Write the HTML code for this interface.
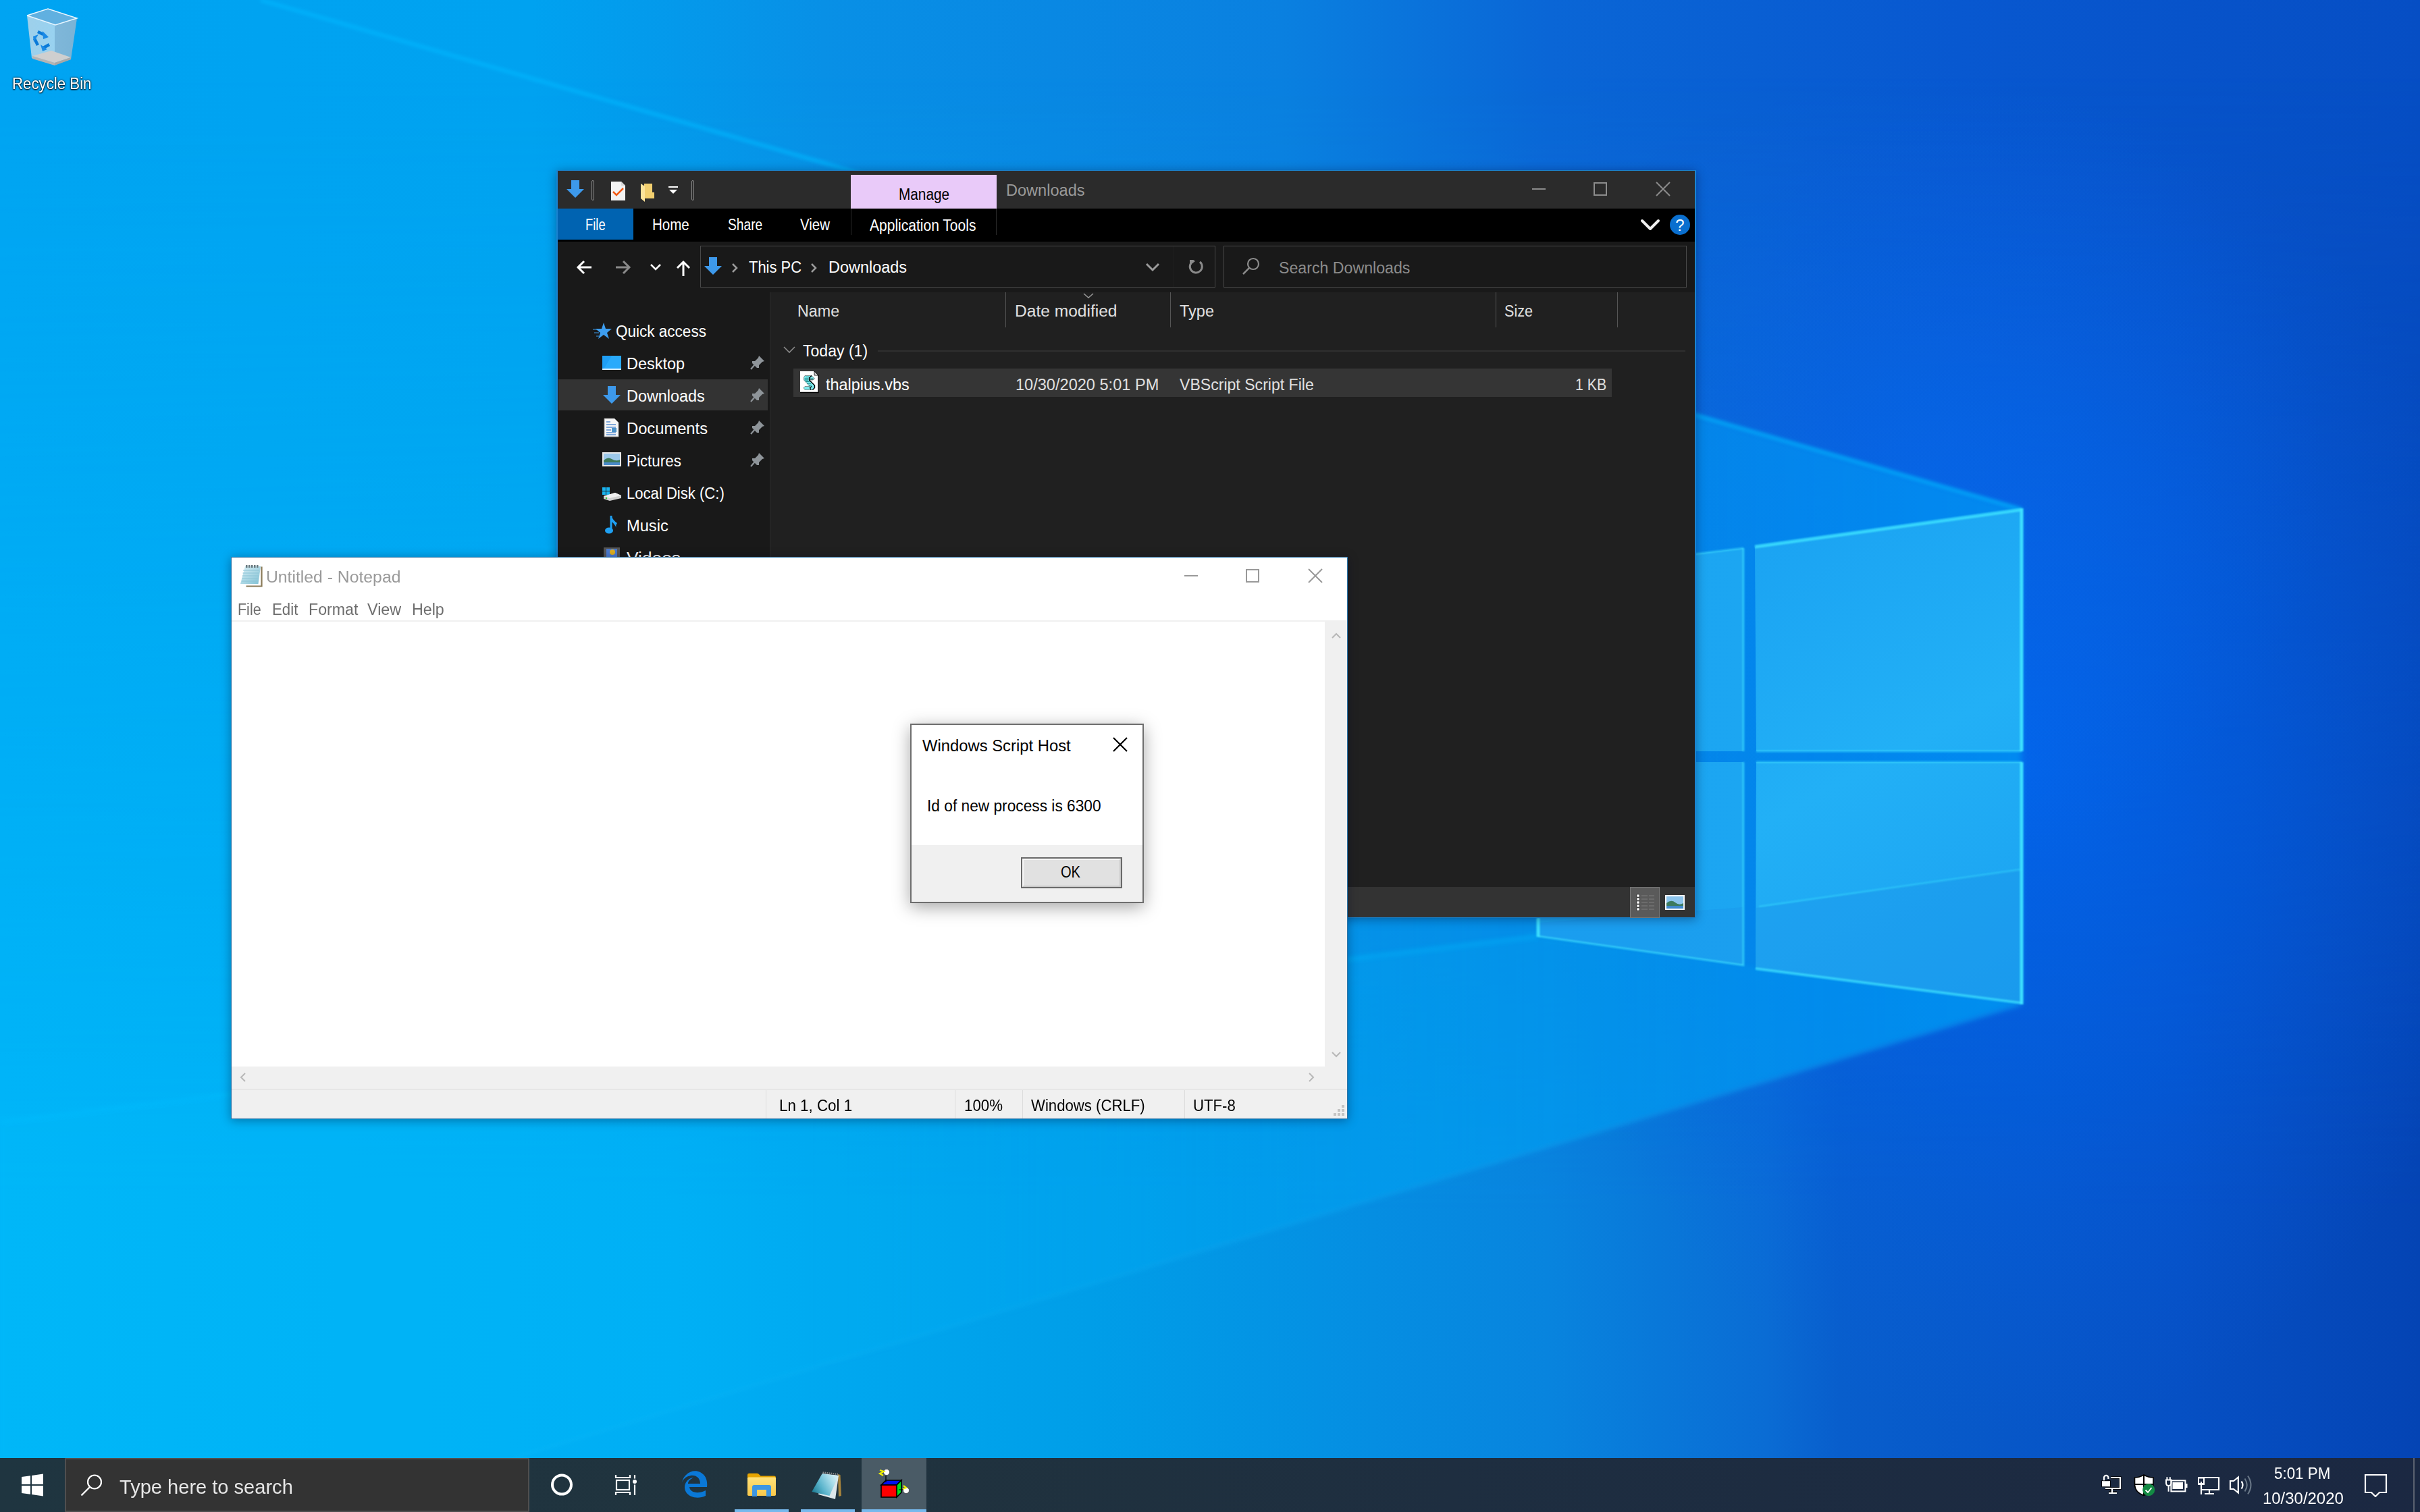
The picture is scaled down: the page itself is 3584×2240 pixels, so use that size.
<!DOCTYPE html>
<html><head><meta charset="utf-8"><style>
html,body{margin:0;padding:0;width:3584px;height:2240px;overflow:hidden;background:#0a8ae6}
.t{position:absolute;white-space:pre;font-family:"Liberation Sans",sans-serif;line-height:normal;transform-origin:0 0}
</style></head><body>

<svg width="3584" height="2240" viewBox="0 0 3584 2240" style="position:absolute;left:0;top:0">
<defs>
 <linearGradient id="gtop" x1="0" y1="0" x2="3584" y2="0" gradientUnits="userSpaceOnUse">
  <stop offset="0" stop-color="#00a4f2"/>
  <stop offset="0.22" stop-color="#00a2f0"/>
  <stop offset="0.34" stop-color="#0890e6"/>
  <stop offset="0.53" stop-color="#0a80e0"/>
  <stop offset="0.64" stop-color="#0a66d6"/>
  <stop offset="0.81" stop-color="#0858d0"/>
  <stop offset="1" stop-color="#064ec4"/>
 </linearGradient>
 <linearGradient id="gbot" x1="0" y1="0" x2="3584" y2="0" gradientUnits="userSpaceOnUse">
  <stop offset="0" stop-color="#00b6f8"/>
  <stop offset="0.28" stop-color="#00aef4"/>
  <stop offset="0.45" stop-color="#009ee8"/>
  <stop offset="0.64" stop-color="#0884de"/>
  <stop offset="0.73" stop-color="#0a6cd4"/>
  <stop offset="0.76" stop-color="#085ecc"/>
  <stop offset="0.9" stop-color="#0650c4"/>
  <stop offset="1" stop-color="#0444b4"/>
 </linearGradient>
 <linearGradient id="vmask" x1="0" y1="0" x2="0" y2="2240" gradientUnits="userSpaceOnUse">
  <stop offset="0.05" stop-color="#fff" stop-opacity="0"/>
  <stop offset="0.8" stop-color="#fff" stop-opacity="1"/>
 </linearGradient>
 <mask id="mbot"><rect width="3584" height="2240" fill="url(#vmask)"/></mask>
 <linearGradient id="wedge" x1="1200" y1="0" x2="2994" y2="0" gradientUnits="userSpaceOnUse">
  <stop offset="0" stop-color="#00a4f4" stop-opacity="0"/>
  <stop offset="0.5" stop-color="#00a0f4" stop-opacity="0.42"/>
  <stop offset="1" stop-color="#0098f4" stop-opacity="0.72"/>
 </linearGradient>
 <radialGradient id="glow" cx="2994" cy="1120" r="800" gradientUnits="userSpaceOnUse" gradientTransform="translate(2994 1080) scale(0.9 1.25) translate(-2994 -1080)">
  <stop offset="0" stop-color="#006cfc" stop-opacity="0.62"/>
  <stop offset="0.5" stop-color="#0066f4" stop-opacity="0.35"/>
  <stop offset="1" stop-color="#0a60e8" stop-opacity="0"/>
 </radialGradient>
 <radialGradient id="glow2" cx="2850" cy="700" r="600" gradientUnits="userSpaceOnUse">
  <stop offset="0" stop-color="#0a70f4" stop-opacity="0.35"/>
  <stop offset="1" stop-color="#0a70f4" stop-opacity="0"/>
 </radialGradient>
 <linearGradient id="paneR" x1="2600" y1="760" x2="2994" y2="1480" gradientUnits="userSpaceOnUse">
  <stop offset="0" stop-color="#1aa2f2"/>
  <stop offset="0.5" stop-color="#22b0f6"/>
  <stop offset="1" stop-color="#1aa0f0"/>
 </linearGradient>
 <linearGradient id="paneL" x1="2280" y1="0" x2="2582" y2="0" gradientUnits="userSpaceOnUse">
  <stop offset="0" stop-color="#1aa4f2"/>
  <stop offset="1" stop-color="#1ca6f2"/>
 </linearGradient>
 <filter id="bl3" x="-10%" y="-10%" width="120%" height="120%"><feGaussianBlur stdDeviation="3"/></filter>
 <filter id="bl2" x="-5%" y="-5%" width="110%" height="110%"><feGaussianBlur stdDeviation="2"/></filter>
 <filter id="bl6" filterUnits="userSpaceOnUse" x="1100" y="150" width="2000" height="1950"><feGaussianBlur stdDeviation="5"/></filter>
 <filter id="bl1"><feGaussianBlur stdDeviation="1"/></filter>
</defs>
<rect width="3584" height="2240" fill="url(#gtop)"/>
<rect width="3584" height="2240" fill="url(#gbot)" mask="url(#mbot)"/>
<rect x="1900" y="0" width="3584" height="2240" fill="url(#glow)"/>
<rect x="2000" y="0" width="1600" height="1400" fill="url(#glow2)"/>
<polygon points="2994,755 1200,236 1200,2029 2994,1488" fill="url(#wedge)" filter="url(#bl6)"/>
<!-- ray lines (soft) -->
<line x1="2994" y1="755" x2="386" y2="0" stroke="#00b8ff" stroke-width="7" opacity="0.55" filter="url(#bl2)"/>
<line x1="2994" y1="1488" x2="760" y2="2160" stroke="#60d8ff" stroke-width="6" opacity="0.06" filter="url(#bl3)"/>
<line x1="0" y1="1662" x2="2278" y2="1387" stroke="#00c0ff" stroke-width="6" opacity="0.35" filter="url(#bl3)"/>
<polygon points="0,1662 2278,1387 2994,1488 760,2160 0,2160" fill="#00c4ff" opacity="0.10" filter="url(#bl3)"/>
<!-- logo panes -->
<polygon points="2270,850 2582,812 2582,1113 2270,1113" fill="url(#paneL)"/>
<polygon points="2599,810 2994,755 2994,1113 2601,1113" fill="url(#paneR)"/>
<polygon points="2270,1129 2582,1129 2582,1430 2278,1387" fill="url(#paneL)"/>
<polygon points="2601,1129 2994,1129 2994,1486 2600,1435" fill="url(#paneR)"/>
<polygon points="2601,1345 2994,1288 2994,1486 2600,1435" fill="#1a8ee8" opacity="0.35"/>
<polygon points="2278,1387 2278,1367 2582,1344 2582,1430" fill="#1a8ee8" opacity="0.3"/>
<g stroke="#40e4ff" fill="none" filter="url(#bl1)">
 <polyline points="2599,810 2994,755" stroke-width="5" opacity="0.8"/>
 <polyline points="2994,1113 2601,1113" stroke-width="3" opacity="0.5"/>
 <polyline points="2601,1129 2994,1129" stroke-width="3" opacity="0.5"/>
 <polyline points="2994,1486 2600,1435" stroke-width="4" opacity="0.7"/>
 <polyline points="2582,812 2270,850" stroke-width="3" opacity="0.5"/>
 <polyline points="2582,812 2582,1113" stroke-width="3" opacity="0.6"/>
 <polyline points="2582,1129 2582,1430 2278,1387" stroke-width="3" opacity="0.6"/>
 <line x1="2278" y1="1360" x2="2278" y2="1388" stroke-width="5" opacity="0.9"/>
 <line x1="2994" y1="753" x2="2994" y2="1113" stroke-width="5" opacity="0.95"/>
 <line x1="2994" y1="1129" x2="2994" y2="1488" stroke-width="5" opacity="0.95"/>
 <line x1="2605" y1="1343" x2="2994" y2="1288" stroke-width="3" opacity="0.35"/>
</g>
</svg>

<svg width="160" height="110" style="position:absolute;left:0;top:0" viewBox="0 0 160 110">
 <defs><linearGradient id="rb" x1="0" y1="0" x2="1" y2="0"><stop offset="0" stop-color="#a6d2ea"/><stop offset="0.55" stop-color="#a0d4f0"/><stop offset="0.56" stop-color="#86b8d8"/><stop offset="1" stop-color="#80b4d4"/></linearGradient></defs>
 <polygon points="40,23 47,86 81,96 105,88 114,27 82,37" fill="url(#rb)" opacity="0.95"/>
 <polygon points="40,23 71,13 114,27 82,37" fill="#60b0e0"/>
 <polyline points="40,23 71,13 114,27 82,37 40,23" stroke="#e8f6ff" stroke-width="1.5" fill="none"/>
 <polygon points="48,83 76,75 105,85 81,93" fill="#cfcfcf"/>
 <polygon points="48,83 81,93 81,97 48,87" fill="#b4b4b4"/>
 <polygon points="81,93 105,85 105,88 81,97" fill="#a8a8a8"/>
 <g stroke="#0a7ad8" stroke-width="4.5" fill="none"><path d="M56 47 L64 51"/><path d="M51 57 L56 67"/><path d="M64 71 L73 66"/></g><g fill="#1a8ae6"><polygon points="63,46 72,55 64,58"/><polygon points="49,54 57,51 50,62"/><polygon points="60,66 70,73 63,76"/></g>
</svg>
<span class="t" style="left:18.4px;top:111.2px;font-size:23px;color:#fff;transform:scaleX(0.9676);text-shadow:0 0 3px #000,0 1px 2px #000">Recycle Bin</span>

<div style="position:absolute;left:824px;top:252px;width:1688px;height:1108px;box-shadow:0 2px 14px rgba(0,10,40,0.38)"></div>
<div style="position:absolute;left:824px;top:252px;width:1688px;height:1108px;background:#1a84d0"></div>
<div style="position:absolute;left:826px;top:253px;width:1684px;height:56px;background:#2b2b2b"></div>
<div style="position:absolute;left:826px;top:309px;width:1684px;height:49px;background:#000"></div>
<div style="position:absolute;left:826px;top:358px;width:1684px;height:75px;background:#191919"></div>
<div style="position:absolute;left:826px;top:433px;width:314px;height:881px;background:#191919"></div>
<div style="position:absolute;left:1140px;top:433px;width:1px;height:881px;background:#2a2a2a"></div>
<div style="position:absolute;left:1141px;top:433px;width:1369px;height:881px;background:#202020"></div>
<div style="position:absolute;left:826px;top:1314px;width:1684px;height:45px;background:#333"></div>
<!-- QAT -->
<svg style="position:absolute;left:839px;top:267px" width="26" height="26" viewBox="0 0 26 26"><polygon points="7,0 19,0 19,13 26,13 13,26 0,13 7,13" fill="#3d99eb"/></svg>
<div style="position:absolute;left:876px;top:267px;width:4px;height:30px;border:1px solid #8a8a8a;border-radius:3px;box-sizing:border-box"></div>
<svg style="position:absolute;left:904px;top:268px" width="24" height="30" viewBox="0 0 24 30"><path d="M1 1 H16 L22 7 V29 H1 Z" fill="#f2f2f2"/><path d="M16 1 V7 H22" fill="#d8d8d8"/><path d="M4 16 L9 21 L19 11" stroke="#f25a14" stroke-width="2.5" fill="none"/></svg>
<svg style="position:absolute;left:949px;top:271px" width="20" height="28" viewBox="0 0 20 28"><rect x="5" y="1" width="12" height="22" fill="#f2cf6f"/><rect x="15" y="14" width="5" height="9" fill="#f2cf6f"/><polygon points="0,1 6,5 6,28 0,23" fill="#fbe39a"/></svg>
<svg style="position:absolute;left:990px;top:276px" width="14" height="12" viewBox="0 0 14 12"><rect x="0" y="0" width="14" height="2" fill="#fff"/><polygon points="1,5 13,5 7,11" fill="#fff"/></svg>
<div style="position:absolute;left:1024px;top:267px;width:4px;height:30px;border:1px solid #8a8a8a;border-radius:3px;box-sizing:border-box"></div>
<div style="position:absolute;left:1260px;top:259px;width:216px;height:50px;background:#e9caf9"></div>
<div style="position:absolute;left:1260px;top:309px;width:1px;height:39px;background:#2a2a2a"></div>
<div style="position:absolute;left:1475px;top:309px;width:1px;height:39px;background:#2a2a2a"></div>
<span class="t" style="left:1330.5px;top:274.6px;font-size:23px;color:#000;transform:scaleX(0.9035);">Manage</span>
<span class="t" style="left:1490.0px;top:268.9px;font-size:23px;color:#9a9a9a;transform:scaleX(1.0238);">Downloads</span>
<svg style="position:absolute;left:2267px;top:268px" width="208" height="24" viewBox="2267 268 208 24">
 <line x1="2269" y1="280" x2="2289" y2="280" stroke="#8c8c8c" stroke-width="2"/>
 <rect x="2361" y="271" width="18" height="18" stroke="#8c8c8c" stroke-width="2" fill="none"/>
 <path d="M2453 270 L2473 290 M2473 270 L2453 290" stroke="#8c8c8c" stroke-width="2"/>
</svg>
<!-- tabs -->
<div style="position:absolute;left:826px;top:309px;width:112px;height:46px;background:#0063b1"></div>
<span class="t" style="left:867.0px;top:320.0px;font-size:23px;color:#fff;transform:scaleX(0.7987);">File</span>
<span class="t" style="left:965.8px;top:320.2px;font-size:23px;color:#fff;transform:scaleX(0.8931);">Home</span>
<span class="t" style="left:1077.5px;top:320.2px;font-size:23px;color:#fff;transform:scaleX(0.8342);">Share</span>
<span class="t" style="left:1185.0px;top:320.2px;font-size:23px;color:#fff;transform:scaleX(0.8900);">View</span>
<span class="t" style="left:1288.4px;top:321.4px;font-size:23px;color:#fff;transform:scaleX(0.9141);">Application Tools</span>
<svg style="position:absolute;left:2428px;top:322px" width="32" height="24" viewBox="0 0 32 24"><path d="M4 5 L16 17 L28 5" stroke="#f0f0f0" stroke-width="4" fill="none" stroke-linejoin="round" stroke-linecap="round"/></svg>
<svg style="position:absolute;left:2472px;top:317px" width="32" height="32" viewBox="0 0 32 32"><circle cx="16" cy="16" r="15" fill="#0a6fcf"/><text x="16" y="25" font-family="Liberation Sans" font-size="24" fill="#fff" text-anchor="middle">?</text></svg>
<!-- nav bar -->
<svg style="position:absolute;left:850px;top:383px" width="180" height="30" viewBox="850 383 180 30">
 <path d="M876 396 H856 M865 387 L856 396 L865 405" stroke="#fff" stroke-width="3" fill="none"/>
 <path d="M912 396 H932 M923 387 L932 396 L923 405" stroke="#8a8a8a" stroke-width="3" fill="none"/>
 <path d="M964 392 L971 399 L978 392" stroke="#fff" stroke-width="2.5" fill="none"/>
 <path d="M1012 409 V389 M1003 397 L1012 388 L1021 397" stroke="#fff" stroke-width="3" fill="none"/>
</svg>
<div style="position:absolute;left:1037px;top:364px;width:763px;height:62px;border:1px solid #484848;box-sizing:border-box"></div>
<div style="position:absolute;left:1738px;top:365px;width:1px;height:60px;background:#202020"></div>
<svg style="position:absolute;left:1043px;top:381px" width="26" height="26" viewBox="0 0 26 26"><polygon points="7,0 19,0 19,13 26,13 13,26 0,13 7,13" fill="#3d99eb"/></svg>
<svg style="position:absolute;left:1080px;top:385px" width="140" height="24" viewBox="1080 385 140 24">
 <path d="M1085 391 L1091 397 L1085 403" stroke="#9a9a9a" stroke-width="2.5" fill="none"/>
 <path d="M1202 391 L1208 397 L1202 403" stroke="#9a9a9a" stroke-width="2.5" fill="none"/>
</svg>
<span class="t" style="left:1108.7px;top:383.4px;font-size:23px;color:#fff;transform:scaleX(0.9536);">This PC</span>
<span class="t" style="left:1226.9px;top:382.9px;font-size:23px;color:#fff;transform:scaleX(1.0202);">Downloads</span>
<svg style="position:absolute;left:1690px;top:385px" width="100" height="24" viewBox="1690 385 100 24">
 <path d="M1698 391 L1707 400 L1716 391" stroke="#9a9a9a" stroke-width="3" fill="none"/>
 <path d="M1777 388 A 9 9 0 1 1 1767 387" stroke="#8a8a8a" stroke-width="3" fill="none"/>
 <polygon points="1762,381 1770,387 1762,393" fill="#8a8a8a"/>
</svg>
<div style="position:absolute;left:1812px;top:364px;width:686px;height:62px;border:1px solid #484848;box-sizing:border-box"></div>
<svg style="position:absolute;left:1838px;top:381px" width="30" height="28" viewBox="0 0 30 28"><circle cx="18" cy="10" r="8" stroke="#8c8c8c" stroke-width="2.2" fill="none"/><path d="M12 16 L3 25" stroke="#8c8c8c" stroke-width="2.5"/></svg>
<span class="t" style="left:1893.6px;top:383.8px;font-size:23px;color:#8c8c8c;transform:scaleX(1.0069);">Search Downloads</span>
<!-- nav pane -->
<svg style="position:absolute;left:876px;top:476px" width="32" height="28" viewBox="0 0 32 28"><polygon points="18,2 21,11 30,11 23,17 26,26 18,20 10,26 13,17 6,11 15,11" fill="#3d9ef0"/><path d="M2 12 H9 M4 17 H11 M7 22 H11" stroke="#3d9ef0" stroke-width="1.2"/></svg>
<span class="t" style="left:911.5px;top:478.4px;font-size:23px;color:#fff;transform:scaleX(0.9790);">Quick access</span>
<div style="position:absolute;left:827px;top:562px;width:310px;height:46px;background:#333"></div>
<svg style="position:absolute;left:892px;top:527px" width="28" height="21" viewBox="0 0 28 21"><rect x="0" y="0" width="28" height="20" fill="#1f9ff5"/><polygon points="14,0 28,0 28,20 2,20" fill="#31b2ff" opacity="0.6"/><rect x="0" y="19" width="28" height="2" fill="#d8ecff"/></svg>
<span class="t" style="left:928.3px;top:526.1px;font-size:23px;color:#fff;transform:scaleX(1.0204);">Desktop</span>
<svg style="position:absolute;left:893px;top:572px" width="26" height="26" viewBox="0 0 26 26"><polygon points="7,0 19,0 19,13 26,13 13,26 0,13 7,13" fill="#3d99eb"/></svg>
<span class="t" style="left:928.3px;top:573.7px;font-size:23px;color:#fff;transform:scaleX(1.0176);">Downloads</span>
<svg style="position:absolute;left:894px;top:619px" width="23" height="29" viewBox="0 0 23 29"><path d="M1 1 H16 L22 7 V28 H1 Z" fill="#f5f5f5" stroke="#9a9a9a" stroke-width="1"/><path d="M4 6 H10 M4 10 H18 M4 14 H18 M4 18 H11 M4 22 H18 M4 25 H18" stroke="#5b8fd0" stroke-width="1.3"/><rect x="12" y="15" width="7" height="6" fill="#4c93c8"/></svg>
<span class="t" style="left:928.3px;top:621.6px;font-size:23px;color:#fff;transform:scaleX(1.0316);">Documents</span>
<svg style="position:absolute;left:892px;top:670px" width="28" height="21" viewBox="0 0 28 21"><rect x="0" y="0" width="28" height="21" fill="#e8e8e8"/><rect x="2" y="2" width="24" height="17" fill="#9cc8ea"/><path d="M2 12 Q8 6 14 10 T26 11 V19 H2 Z" fill="#3e7a5a"/><rect x="2" y="15" width="24" height="4" fill="#4a8ac8"/></svg>
<span class="t" style="left:928.3px;top:669.6px;font-size:23px;color:#fff;transform:scaleX(0.9736);">Pictures</span>
<svg style="position:absolute;left:891px;top:721px" width="30" height="22" viewBox="0 0 30 22"><rect x="1" y="1" width="5" height="5" fill="#19b4f0"/><rect x="7" y="1" width="5" height="5" fill="#19b4f0"/><rect x="1" y="7" width="5" height="5" fill="#19b4f0"/><rect x="7" y="7" width="5" height="5" fill="#19b4f0"/><polygon points="3,14 20,9 29,13 29,17 12,21 3,18" fill="#d0d0d0"/><polygon points="3,14 12,17 29,13 20,9" fill="#f0f0f0"/><circle cx="7" cy="17" r="1.2" fill="#3c3"/></svg>
<span class="t" style="left:928.3px;top:717.7px;font-size:23px;color:#fff;transform:scaleX(0.9601);">Local Disk (C:)</span>
<svg style="position:absolute;left:896px;top:763px" width="20" height="29" viewBox="0 0 20 29"><path d="M9 1 V22" stroke="#1fa0f2" stroke-width="3"/><ellipse cx="6" cy="23" rx="6" ry="4.5" fill="#1fa0f2"/><path d="M9 1 Q12 8 18 12 Q15 16 17 19 Q13 12 10 10" fill="#1fa0f2"/></svg>
<span class="t" style="left:928.3px;top:765.6px;font-size:23px;color:#fff;transform:scaleX(1.0289);">Music</span>
<svg style="position:absolute;left:894px;top:811px" width="24" height="14" viewBox="0 0 24 14"><rect x="0" y="0" width="24" height="14" fill="#555"/><rect x="4" y="2" width="16" height="12" fill="#4a7ad0"/><circle cx="13" cy="7" r="4" fill="#e0b020"/></svg>
<span class="t" style="left:928.3px;top:813.6px;font-size:23px;color:#fff;transform:scaleX(1.1441);">Videos</span>
<svg style="position:absolute;left:1111px;top:526px" width="22" height="22" viewBox="0 0 22 22"><path d="M13 1 L21 9 L18 10 L13 15 L13 19 L10 19 L3 12 L3 9 L7 9 L12 4 Z" fill="#8e9499"/><path d="M7 14 L1 21" stroke="#8e9499" stroke-width="2.2"/></svg><svg style="position:absolute;left:1111px;top:574px" width="22" height="22" viewBox="0 0 22 22"><path d="M13 1 L21 9 L18 10 L13 15 L13 19 L10 19 L3 12 L3 9 L7 9 L12 4 Z" fill="#8e9499"/><path d="M7 14 L1 21" stroke="#8e9499" stroke-width="2.2"/></svg><svg style="position:absolute;left:1111px;top:622px" width="22" height="22" viewBox="0 0 22 22"><path d="M13 1 L21 9 L18 10 L13 15 L13 19 L10 19 L3 12 L3 9 L7 9 L12 4 Z" fill="#8e9499"/><path d="M7 14 L1 21" stroke="#8e9499" stroke-width="2.2"/></svg><svg style="position:absolute;left:1111px;top:670px" width="22" height="22" viewBox="0 0 22 22"><path d="M13 1 L21 9 L18 10 L13 15 L13 19 L10 19 L3 12 L3 9 L7 9 L12 4 Z" fill="#8e9499"/><path d="M7 14 L1 21" stroke="#8e9499" stroke-width="2.2"/></svg>
<!-- headers -->
<span class="t" style="left:1181.0px;top:448.1px;font-size:23px;color:#e0e0e0;transform:scaleX(1.0121);">Name</span>
<span class="t" style="left:1502.9px;top:448.1px;font-size:23px;color:#e0e0e0;transform:scaleX(1.0675);">Date modified</span>
<span class="t" style="left:1747.1px;top:448.1px;font-size:23px;color:#e0e0e0;transform:scaleX(1.0226);">Type</span>
<span class="t" style="left:2228.4px;top:448.1px;font-size:23px;color:#e0e0e0;transform:scaleX(0.9385);">Size</span>
<div style="position:absolute;left:1489px;top:433px;width:1px;height:52px;background:#555"></div>
<div style="position:absolute;left:1733px;top:433px;width:1px;height:52px;background:#555"></div>
<div style="position:absolute;left:2215px;top:433px;width:1px;height:52px;background:#555"></div>
<div style="position:absolute;left:2395px;top:433px;width:1px;height:52px;background:#555"></div>
<svg style="position:absolute;left:1603px;top:433px" width="18" height="10" viewBox="0 0 18 10"><path d="M2 2 L9 8 L16 2" stroke="#9a9a9a" stroke-width="1.5" fill="none"/></svg>
<svg style="position:absolute;left:1158px;top:510px" width="22" height="16" viewBox="0 0 22 16"><path d="M3 4 L11 12 L19 4" stroke="#8a8a8a" stroke-width="1.6" fill="none"/></svg>
<span class="t" style="left:1188.9px;top:507.1px;font-size:23px;color:#fff;transform:scaleX(1.0023);">Today (1)</span>
<div style="position:absolute;left:1300px;top:519px;width:1196px;height:2px;background:#2f2f2f"></div>
<div style="position:absolute;left:1175px;top:546px;width:1212px;height:42px;background:#353535"></div>
<svg style="position:absolute;left:1185px;top:550px" width="28" height="33" viewBox="0 0 28 33"><polygon points="0,0 21,0 27,6 27,31 0,31" fill="#fff"/><path d="M21 0.5 L27 6.5 V31.5 H0" stroke="#000" stroke-width="1.3" fill="none"/><polygon points="21,0 21,6 27,6" fill="#d0d0d0" stroke="#000" stroke-width="0.8"/><path d="M7 6.5 H17 L21.5 11 L19 13 H14 L21.5 20.5 V24.5 L18.5 27.5 H7 L5 24.5 L7 22.5 H14.5 L5.5 13 V9 Z" fill="#7eeaee" stroke="#555" stroke-width="0.6"/><path d="M17 6.5 L13.5 10 V13 L21.5 21 V24.5 L18.5 27.5" stroke="#000" stroke-width="1.4" fill="none"/><path d="M14 11.5 H19.5" stroke="#000" stroke-width="1.2"/><path d="M8 8.5 H13 M6.5 11 H12 M6.5 13 H12 M8 15.5 H14 M10 18 H16 M11.5 20.5 H17" stroke="#0a7a7a" stroke-width="1.2"/><path d="M16 27.5 L14.5 24.5 L17 22.5" stroke="#000" stroke-width="1.2" fill="none"/></svg>
<span class="t" style="left:1222.5px;top:556.6px;font-size:23px;color:#fff;transform:scaleX(1.0192);">thalpius.vbs</span>
<span class="t" style="left:1503.7px;top:556.6px;font-size:23px;color:#e0e0e0;transform:scaleX(1.0248);">10/30/2020 5:01 PM</span>
<span class="t" style="left:1747.0px;top:556.6px;font-size:23px;color:#e0e0e0;transform:scaleX(1.0035);">VBScript Script File</span>
<span class="t" style="left:2333.2px;top:556.6px;font-size:23px;color:#e0e0e0;transform:scaleX(0.9283);">1 KB</span>
<!-- status bar view buttons -->
<div style="position:absolute;left:2414px;top:1314px;width:44px;height:46px;background:#5a5a5a;border:1px solid #777;box-sizing:border-box"></div>
<svg style="position:absolute;left:2422px;top:1324px" width="30" height="28" viewBox="0 0 30 28"><g fill="#fff" stroke="#222" stroke-width="0.6"><rect x="2" y="1" width="4" height="4"/><rect x="2" y="6" width="4" height="4"/><rect x="2" y="11" width="4" height="4"/><rect x="2" y="16" width="4" height="4"/><rect x="2" y="21" width="4" height="4"/></g><g stroke="#888" stroke-width="0.8"><path d="M9 3 H18 M20 3 H28 M9 8 H18 M20 8 H28 M9 13 H18 M20 13 H28 M9 18 H18 M20 18 H28 M9 23 H18 M20 23 H28"/></g></svg>
<svg style="position:absolute;left:2466px;top:1326px" width="29" height="22" viewBox="0 0 29 22"><rect x="0" y="0" width="29" height="22" fill="#f4f4f4"/><rect x="2" y="2" width="25" height="18" fill="#8cc4ec"/><path d="M2 12 Q9 6 15 11 T27 12 V20 H2 Z" fill="#3c7a5e"/><rect x="2" y="16" width="25" height="4" fill="#3f88cc"/></svg>


<div style="position:absolute;left:342px;top:825px;width:1654px;height:833px;box-shadow:0 2px 14px rgba(0,10,40,0.38)"></div>
<div style="position:absolute;left:342px;top:825px;width:1654px;height:833px;background:#2a74a8"></div>
<div style="position:absolute;left:343px;top:826px;width:1652px;height:831px;background:#fff"></div>
<svg style="position:absolute;left:355px;top:836px" width="34" height="34" viewBox="0 0 34 34"><defs><linearGradient id="npg" x1="0" y1="0" x2="1" y2="1"><stop offset="0" stop-color="#dcf0f6"/><stop offset="1" stop-color="#7ec0d4"/></linearGradient></defs><rect x="9" y="3" width="24" height="30" fill="#fff"/><path d="M32.5 3.5 V32.5 H9.5" stroke="#8a7a58" stroke-width="2.2" fill="none"/><polygon points="8,3 31,3 27.5,29 1,29" fill="url(#npg)"/><path d="M5 9 H29 M4.5 13 H28.5 M4 17 H28 M3.5 21 H27.5 M3 25 H27" stroke="#8cc4d6" stroke-width="1.2"/><g fill="#6a7a80"><rect x="9" y="1" width="2.5" height="4"/><rect x="13" y="1" width="2.5" height="4"/><rect x="17" y="1" width="2.5" height="4"/><rect x="21" y="1" width="2.5" height="4"/><rect x="25" y="1" width="2.5" height="4"/></g></svg>
<span class="t" style="left:393.8px;top:842.3px;font-size:23px;color:#999;transform:scaleX(1.0756);">Untitled - Notepad</span>
<svg style="position:absolute;left:1752px;top:841px" width="208" height="24" viewBox="1752 841 208 24">
 <line x1="1754" y1="853" x2="1774" y2="853" stroke="#999" stroke-width="2"/>
 <rect x="1846" y="844" width="18" height="18" stroke="#999" stroke-width="2" fill="none"/>
 <path d="M1938 843 L1958 863 M1958 843 L1938 863" stroke="#999" stroke-width="2"/>
</svg>
<span class="t" style="left:351.5px;top:889.8px;font-size:23px;color:#6d6d6d;transform:scaleX(0.9336);">File</span>
<span class="t" style="left:402.5px;top:889.8px;font-size:23px;color:#6d6d6d;transform:scaleX(0.9687);">Edit</span>
<span class="t" style="left:456.6px;top:889.8px;font-size:23px;color:#6d6d6d;transform:scaleX(1.0076);">Format</span>
<span class="t" style="left:544.4px;top:889.8px;font-size:23px;color:#6d6d6d;transform:scaleX(1.0154);">View</span>
<span class="t" style="left:610.4px;top:889.8px;font-size:23px;color:#6d6d6d;transform:scaleX(1.0103);">Help</span>
<div style="position:absolute;left:343px;top:919px;width:1652px;height:2px;background:#f0f0f0"></div>
<div style="position:absolute;left:1962px;top:921px;width:33px;height:659px;background:#f0f0f0"></div>
<div style="position:absolute;left:343px;top:1580px;width:1652px;height:33px;background:#f0f0f0"></div>
<div style="position:absolute;left:343px;top:1613px;width:1652px;height:1px;background:#d9d9d9"></div>
<div style="position:absolute;left:343px;top:1614px;width:1652px;height:43px;background:#f0f0f0"></div>
<svg style="position:absolute;left:343px;top:921px" width="1652" height="736" viewBox="343 921 1652 736">
 <path d="M1973 945 L1979 939 L1985 945" stroke="#b8b8b8" stroke-width="2" fill="none"/>
 <path d="M1973 1559 L1979 1565 L1985 1559" stroke="#b8b8b8" stroke-width="2" fill="none"/>
 <path d="M363 1590 L357 1596 L363 1602" stroke="#b8b8b8" stroke-width="2" fill="none"/>
 <path d="M1939 1590 L1945 1596 L1939 1602" stroke="#b8b8b8" stroke-width="2" fill="none"/>
 <g fill="#c4c4c4"><rect x="1987" y="1637" width="4" height="4"/><rect x="1981" y="1643" width="4" height="4"/><rect x="1987" y="1643" width="4" height="4"/><rect x="1975" y="1649" width="4" height="4"/><rect x="1981" y="1649" width="4" height="4"/><rect x="1987" y="1649" width="4" height="4"/></g>
 <g fill="#dcdcdc"><rect x="1134" y="1615" width="1" height="42"/><rect x="1414" y="1615" width="1" height="42"/><rect x="1514" y="1615" width="1" height="42"/><rect x="1754" y="1615" width="1" height="42"/></g>
</svg>
<span class="t" style="left:1154.0px;top:1625.1px;font-size:23px;color:#000;transform:scaleX(0.9726);">Ln 1, Col 1</span>
<span class="t" style="left:1427.5px;top:1625.1px;font-size:23px;color:#000;transform:scaleX(0.9689);">100%</span>
<span class="t" style="left:1526.6px;top:1625.1px;font-size:23px;color:#000;transform:scaleX(0.9636);">Windows (CRLF)</span>
<span class="t" style="left:1766.7px;top:1625.1px;font-size:23px;color:#000;transform:scaleX(0.9636);">UTF-8</span>


<div style="position:absolute;left:1348px;top:1072px;width:346px;height:266px;box-shadow:0 6px 24px rgba(0,0,0,0.35)"></div>
<div style="position:absolute;left:1348px;top:1072px;width:346px;height:266px;background:#6e6e6e"></div>
<div style="position:absolute;left:1350px;top:1074px;width:342px;height:178px;background:#fff"></div>
<div style="position:absolute;left:1350px;top:1252px;width:342px;height:84px;background:#f0f0f0"></div>
<span class="t" style="left:1366.4px;top:1092.0px;font-size:23px;color:#000;transform:scaleX(1.0355);">Windows Script Host</span>
<svg style="position:absolute;left:1646px;top:1090px" width="26" height="26" viewBox="0 0 26 26"><path d="M3 3 L23 23 M23 3 L3 23" stroke="#000" stroke-width="2.2"/></svg>
<span class="t" style="left:1372.6px;top:1181.2px;font-size:23px;color:#000;transform:scaleX(0.9876);">Id of new process is 6300</span>
<div style="position:absolute;left:1512px;top:1270px;width:150px;height:46px;background:#6a6a6a"></div>
<div style="position:absolute;left:1514px;top:1272px;width:146px;height:42px;background:#e1e1e1;border:2px solid #f8f8f8;box-sizing:border-box;border-right-color:#c8c8c8;border-bottom-color:#c8c8c8"></div>
<span class="t" style="left:1571.0px;top:1278.6px;font-size:23px;color:#000;transform:scaleX(0.8726);">OK</span>


<div style="position:absolute;left:0;top:2160px;width:3584px;height:80px;background:linear-gradient(90deg,#1f3540 0%,#20333e 35%,#1e2e40 60%,#1b2842 100%)"></div>
<svg style="position:absolute;left:30px;top:2182px" width="36" height="36" viewBox="0 0 36 36"><polygon points="2,6 15,4.2 15,17 2,17" fill="#fff"/><polygon points="17,4 34,1.6 34,17 17,17" fill="#fff"/><polygon points="2,19 15,19 15,31.8 2,30" fill="#fff"/><polygon points="17,19 34,19 34,34.4 17,32" fill="#fff"/></svg>
<div style="position:absolute;left:96px;top:2160px;width:688px;height:80px;background:#333;border:2px solid #4f4f4f;box-sizing:border-box"></div>
<svg style="position:absolute;left:116px;top:2180px" width="40" height="40" viewBox="0 0 40 40"><circle cx="24" cy="15.5" r="10" stroke="#fff" stroke-width="2.2" fill="none"/><path d="M17 23 L4.5 35.5" stroke="#fff" stroke-width="2.4"/></svg>
<span class="t" style="left:176.9px;top:2185.5px;font-size:30px;color:#e6e6e6;transform:scaleX(0.9685);">Type here to search</span>
<svg style="position:absolute;left:812px;top:2180px" width="40" height="40" viewBox="0 0 40 40"><circle cx="20" cy="19.6" r="14" stroke="#fff" stroke-width="4" fill="none"/></svg>
<svg style="position:absolute;left:908px;top:2182px" width="40" height="36" viewBox="0 0 40 36"><path d="M4 3 V7 H25 V3 M4 33 V29 H25 V33" stroke="#fff" stroke-width="2.2" fill="none"/><rect x="5" y="11" width="19" height="14" stroke="#fff" stroke-width="2.2" fill="none"/><path d="M32 3 V8.5 M32 17.5 V33" stroke="#fff" stroke-width="2.2"/><circle cx="32" cy="13" r="3" fill="#fff"/></svg>
<svg style="position:absolute;left:1007px;top:2176px" width="44" height="44" viewBox="0 0 44 44"><path d="M3 20 C6 6 20 0 30 5 C39 10 41 18 40 27 H14 C15 35 26 38 38 32 V40 C26 46 8 42 7 28 C7 20 12 14 20 13 C14 16 12 19 12 22 H30 C30 14 24 9 16 10 C10 11 5 15 3 20 Z" fill="#0a78d7"/></svg>
<svg style="position:absolute;left:1100px;top:2178px" width="56" height="44" viewBox="1100 2178 56 44"><defs><linearGradient id="fdg" x1="0" y1="0" x2="0" y2="1"><stop offset="0" stop-color="#ffe27a"/><stop offset="1" stop-color="#f9c84a"/></linearGradient></defs><path d="M1107 2192 V2185 Q1107 2182.7 1109.5 2182.7 H1121 Q1123 2182.7 1125 2185 L1126.5 2186.5 H1146.5 Q1149 2186.5 1149 2189 V2192 Z" fill="#e6a400"/><rect x="1107" y="2188.5" width="42" height="27.5" rx="1.8" fill="url(#fdg)"/><path d="M1114 2217 V2203 Q1114 2200 1117 2200 H1139 Q1142 2200 1142 2203 V2217 H1135 V2207 H1121 V2217 Z" fill="#3d96e2"/></svg>
<svg style="position:absolute;left:1190px;top:2170px" width="70" height="60" viewBox="0 0 70 60"><defs><linearGradient id="tng" x1="12" y1="40" x2="52" y2="16" gradientUnits="userSpaceOnUse"><stop offset="0" stop-color="#1a7890"/><stop offset="0.35" stop-color="#5ab4cc"/><stop offset="0.7" stop-color="#a8dcea"/><stop offset="1" stop-color="#e4f4f8"/></linearGradient></defs><polygon points="51,14 54.5,15 56,46 52,47" fill="#a8843c"/><polygon points="28,13 52,16 47,51 22,44" fill="#dde6ea"/><polygon points="27.4,13.5 52,16 38.5,46 12.3,40" fill="url(#tng)"/><path d="M28.5 11.5 L51 14" stroke="#8a8a8a" stroke-width="2.5" stroke-dasharray="1.5 1.5"/></svg>
<div style="position:absolute;left:1276px;top:2160px;width:96px;height:80px;background:#4a5b66"></div>
<svg style="position:absolute;left:1290px;top:2170px" width="70" height="58" viewBox="1290 2170 70 58"><polygon points="1305,2200 1312,2193 1335,2193 1328,2200" fill="#0010f0" stroke="#000" stroke-width="1.6"/><polygon points="1328,2200 1335,2193 1335,2211 1328,2218" fill="#00e020" stroke="#000" stroke-width="1.6"/><rect x="1305" y="2200" width="23" height="18" fill="#ff0000" stroke="#000" stroke-width="1.6"/><path d="M1312 2186 V2196 M1331 2207 H1338" stroke="#000" stroke-width="1.2"/><circle cx="1313" cy="2181" r="4.5" fill="#fff" stroke="#222" stroke-width="0.6"/><circle cx="1342" cy="2208" r="4.5" fill="#fff" stroke="#222" stroke-width="0.6"/><path d="M1303 2178 L1309 2180 L1303 2183 L1308 2186" stroke="#f0f000" stroke-width="2.2" fill="none"/><path d="M1338 2201 L1342 2204 L1337 2206" stroke="#f0f000" stroke-width="2.2" fill="none"/></svg>
<div style="position:absolute;left:1088px;top:2236px;width:80px;height:4px;background:#76b9ed"></div>
<div style="position:absolute;left:1186px;top:2236px;width:80px;height:4px;background:#76b9ed"></div>
<div style="position:absolute;left:1276px;top:2236px;width:96px;height:4px;background:#76b9ed"></div>
<!-- tray -->
<svg style="position:absolute;left:3100px;top:2170px" width="250" height="56" viewBox="3100 2170 250 56">
 <g stroke="#000" stroke-width="4" fill="none" opacity="0.7">
  <path d="M3126 2189 H3140 V2205 H3118"/><path d="M3127 2205 V2211 M3123 2211 H3135"/>
 </g>
 <g stroke="#fff" stroke-width="2.2" fill="none">
  <path d="M3126 2189 H3140 V2205 H3118"/><path d="M3128 2205 V2211 M3123 2212 H3135"/>
  <path d="M3116 2194 V2189 A3.2 3.2 0 0 1 3122.4 2189 V2191"/>
 </g>
 <rect x="3112" y="2193" width="14" height="10" fill="#000" opacity="0.7"/>
 <rect x="3113" y="2194.2" width="12" height="8" fill="#fff"/>
 <path d="M3175 2185 C3170 2188 3166 2189 3161.5 2189 V2200 C3162 2208 3168 2213 3175 2215.5 C3182 2213 3188 2208 3189 2200 V2189 C3184 2189 3180 2188 3175 2185 Z" fill="#fff" stroke="#000" stroke-width="1.6"/>
 <path d="M3175 2185 V2215 M3161.5 2199 H3189" stroke="#000" stroke-width="2"/>
 <circle cx="3182.2" cy="2207.2" r="9" fill="#138a43"/>
 <path d="M3177.5 2207.5 L3181 2211 L3186.5 2204" stroke="#fff" stroke-width="1.8" fill="none"/>
 <g stroke="#fff" stroke-width="2" fill="none">
  <rect x="3215.4" y="2193.4" width="21" height="16"/>
  <path d="M3209.4 2188.3 V2192.4 M3213.8 2188.3 V2192.4 M3208 2192.4 V2197 Q3208 2201 3211.6 2201 Q3215.6 2201 3215.6 2197 V2192.4 Z M3211.6 2201 V2209.7"/>
 </g>
 <rect x="3217.5" y="2196" width="15.5" height="10" fill="#fff"/>
 <rect x="3237" y="2198" width="2.5" height="6" fill="#fff"/>
 <g stroke="#fff" stroke-width="2.2" fill="none">
  <path d="M3265 2189 H3286 V2207 H3260"/>
  <path d="M3260 2200 V2214 M3272 2207 V2212 M3265 2213 H3279"/>
  <path d="M3303 2194 H3308 L3314.8 2188.5 V2211.5 L3308 2206 H3303 Z"/>
  <path d="M3319.5 2194.5 Q3323.5 2200 3319.5 2205.5"/>
 </g>
 <rect x="3255" y="2188" width="10" height="12" fill="#fff"/>
 <path d="M3257 2190.5 H3263 V2197 H3261 V2195 H3259 V2197 H3257 Z" fill="#1b2842"/>
 <path d="M3324.5 2190.5 Q3331 2200 3324.5 2209.5" stroke="#6a7888" stroke-width="2" fill="none"/>
 <path d="M3329 2186.5 Q3338 2200 3329 2213.5" stroke="#6a7888" stroke-width="2" fill="none"/>
</svg>
<span class="t" style="left:3368.4px;top:2169.8px;font-size:23px;color:#fff;transform:scaleX(0.9725);">5:01 PM</span>
<span class="t" style="left:3350.7px;top:2206.7px;font-size:23px;color:#fff;transform:scaleX(1.0406);">10/30/2020</span>
<svg style="position:absolute;left:3500px;top:2182px" width="36" height="36" viewBox="0 0 36 36"><path d="M3 3 H34 V29 H24 L18 35 L12 29 H3 Z" stroke="#fff" stroke-width="2.2" fill="none"/></svg>
<div style="position:absolute;left:3574px;top:2160px;width:2px;height:80px;background:#5a6270"></div>

</body></html>
